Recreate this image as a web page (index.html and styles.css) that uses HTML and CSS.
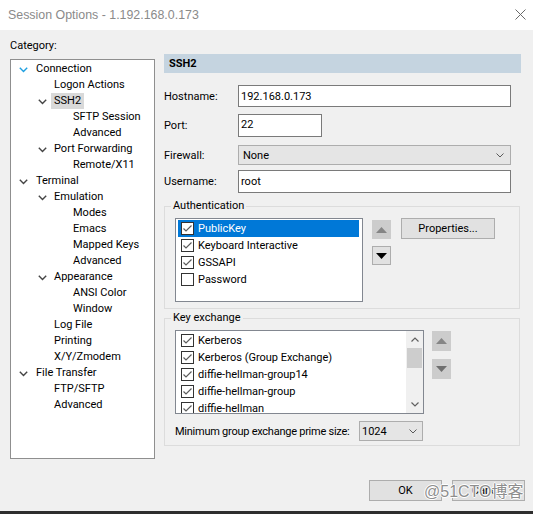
FILE: index.html
```html
<!DOCTYPE html>
<html>
<head>
<meta charset="utf-8">
<title>Session Options</title>
<link rel="stylesheet" href="styles.css">
</head>
<body>
<div class="window">
  <div class="titlebar">
    <span class="title">Session Options - 1.192.168.0.173</span>
    <svg class="close" width="11" height="11" viewBox="0 0 11 11"><path d="M0.5 0.5L10.5 10.5M10.5 0.5L0.5 10.5" stroke="#6a6a6a" stroke-width="1" fill="none"/></svg>
  </div>
  <div class="main">
    <div class="left">
      <div class="cat-label">Category:</div>
      <div class="tree">
        <div class="node l0"><span class="tw"><svg class="chev blue" width="9" height="6" viewBox="0 0 9 6"><path d="M0.8 0.8L4.5 4.5L8.2 0.8"/></svg></span><span class="lbl">Connection</span></div>
        <div class="node l1"><span class="tw"></span><span class="lbl">Logon Actions</span></div>
        <div class="node l1"><span class="tw"><svg class="chev" width="9" height="6" viewBox="0 0 9 6"><path d="M0.8 0.8L4.5 4.5L8.2 0.8"/></svg></span><span class="lbl sel">SSH2</span></div>
        <div class="node l2"><span class="tw"></span><span class="lbl">SFTP Session</span></div>
        <div class="node l2"><span class="tw"></span><span class="lbl">Advanced</span></div>
        <div class="node l1"><span class="tw"><svg class="chev" width="9" height="6" viewBox="0 0 9 6"><path d="M0.8 0.8L4.5 4.5L8.2 0.8"/></svg></span><span class="lbl">Port Forwarding</span></div>
        <div class="node l2"><span class="tw"></span><span class="lbl">Remote/X11</span></div>
        <div class="node l0"><span class="tw"><svg class="chev" width="9" height="6" viewBox="0 0 9 6"><path d="M0.8 0.8L4.5 4.5L8.2 0.8"/></svg></span><span class="lbl">Terminal</span></div>
        <div class="node l1"><span class="tw"><svg class="chev" width="9" height="6" viewBox="0 0 9 6"><path d="M0.8 0.8L4.5 4.5L8.2 0.8"/></svg></span><span class="lbl">Emulation</span></div>
        <div class="node l2"><span class="tw"></span><span class="lbl">Modes</span></div>
        <div class="node l2"><span class="tw"></span><span class="lbl">Emacs</span></div>
        <div class="node l2"><span class="tw"></span><span class="lbl">Mapped Keys</span></div>
        <div class="node l2"><span class="tw"></span><span class="lbl">Advanced</span></div>
        <div class="node l1"><span class="tw"><svg class="chev" width="9" height="6" viewBox="0 0 9 6"><path d="M0.8 0.8L4.5 4.5L8.2 0.8"/></svg></span><span class="lbl">Appearance</span></div>
        <div class="node l2"><span class="tw"></span><span class="lbl">ANSI Color</span></div>
        <div class="node l2"><span class="tw"></span><span class="lbl">Window</span></div>
        <div class="node l1"><span class="tw"></span><span class="lbl">Log File</span></div>
        <div class="node l1"><span class="tw"></span><span class="lbl">Printing</span></div>
        <div class="node l1"><span class="tw"></span><span class="lbl">X/Y/Zmodem</span></div>
        <div class="node l0"><span class="tw"><svg class="chev" width="9" height="6" viewBox="0 0 9 6"><path d="M0.8 0.8L4.5 4.5L8.2 0.8"/></svg></span><span class="lbl">File Transfer</span></div>
        <div class="node l1"><span class="tw"></span><span class="lbl">FTP/SFTP</span></div>
        <div class="node l1"><span class="tw"></span><span class="lbl">Advanced</span></div>
      </div>
    </div>

    <div class="right">
      <div class="header">SSH2</div>

      <div class="row r-host"><span class="flabel">Hostname:</span><div class="field wide">192.168.0.173</div></div>
      <div class="row r-port"><span class="flabel">Port:</span><div class="field port">22</div></div>
      <div class="row r-fw"><span class="flabel">Firewall:</span><div class="select wide"><span>None</span><svg class="dd" width="8" height="5" viewBox="0 0 8 5"><path d="M0.5 0.5L4 4L7.5 0.5"/></svg></div></div>
      <div class="row r-user"><span class="flabel">Username:</span><div class="field wide">root</div></div>

      <fieldset class="group auth">
        <legend>Authentication</legend>
        <div class="group-body">
          <div class="list auth-list">
            <div class="item selected"><span class="cb"><svg width="11" height="11" viewBox="0 0 11 11"><path d="M1.5 5.5L4 8L9.5 2.5"/></svg></span>PublicKey</div>
            <div class="item"><span class="cb"><svg width="11" height="11" viewBox="0 0 11 11"><path d="M1.5 5.5L4 8L9.5 2.5"/></svg></span>Keyboard Interactive</div>
            <div class="item"><span class="cb"><svg width="11" height="11" viewBox="0 0 11 11"><path d="M1.5 5.5L4 8L9.5 2.5"/></svg></span>GSSAPI</div>
            <div class="item"><span class="cb"></span>Password</div>
          </div>
          <div class="arrows">
            <div class="abtn disabled"><svg width="11" height="6" viewBox="0 0 11 6"><path d="M0 6L5.5 0L11 6Z"/></svg></div>
            <div class="abtn"><svg width="11" height="6" viewBox="0 0 11 6"><path d="M0 0L5.5 6L11 0Z"/></svg></div>
          </div>
          <div class="btn props">Properties...</div>
        </div>
      </fieldset>

      <fieldset class="group kex">
        <legend>Key exchange</legend>
        <div class="group-body">
          <div class="list kex-list">
            <div class="items">
              <div class="item"><span class="cb"><svg width="11" height="11" viewBox="0 0 11 11"><path d="M1.5 5.5L4 8L9.5 2.5"/></svg></span>Kerberos</div>
              <div class="item"><span class="cb"><svg width="11" height="11" viewBox="0 0 11 11"><path d="M1.5 5.5L4 8L9.5 2.5"/></svg></span>Kerberos (Group Exchange)</div>
              <div class="item"><span class="cb"><svg width="11" height="11" viewBox="0 0 11 11"><path d="M1.5 5.5L4 8L9.5 2.5"/></svg></span>diffie-hellman-group14</div>
              <div class="item"><span class="cb"><svg width="11" height="11" viewBox="0 0 11 11"><path d="M1.5 5.5L4 8L9.5 2.5"/></svg></span>diffie-hellman-group</div>
              <div class="item"><span class="cb"><svg width="11" height="11" viewBox="0 0 11 11"><path d="M1.5 5.5L4 8L9.5 2.5"/></svg></span>diffie-hellman</div>
            </div>
            <div class="scrollbar">
              <div class="sb-arrow"><svg width="8" height="5" viewBox="0 0 8 5"><path d="M0.5 4.5L4 1L7.5 4.5"/></svg></div>
              <div class="sb-track"><div class="sb-thumb"></div></div>
              <div class="sb-arrow"><svg width="8" height="5" viewBox="0 0 8 5"><path d="M0.5 0.5L4 4L7.5 0.5"/></svg></div>
            </div>
          </div>
          <div class="arrows kex-arrows">
            <div class="abtn disabled"><svg width="11" height="6" viewBox="0 0 11 6"><path d="M0 6L5.5 0L11 6Z"/></svg></div>
            <div class="abtn disabled dark"><svg width="11" height="6" viewBox="0 0 11 6"><path d="M0 0L5.5 6L11 0Z"/></svg></div>
          </div>
        </div>
        <div class="min-row">
          <span class="min-label">Minimum group exchange prime size:</span>
          <div class="select small"><span>1024</span><svg class="dd" width="8" height="5" viewBox="0 0 8 5"><path d="M0.5 0.5L4 4L7.5 0.5"/></svg></div>
        </div>
      </fieldset>
    </div>
  </div>

  <div class="footer">
    <div class="btn dlg">OK</div>
    <div class="btn dlg">Cancel</div>
    <div class="watermark">@51CTO博客</div>
  </div>
  <div class="bottom-line"></div>
</div>
</body>
</html>
```

FILE: styles.css
```css
* { box-sizing: border-box; }
html, body { margin: 0; padding: 0; }
body {
  font-family: Roboto, "Liberation Sans", Arial, sans-serif;
  font-size: 11px;
  color: #000;
  background: #f0f0f0;
}
.window {
  width: 533px;
  height: 514px;
  background: #f0f0f0;
  display: flex;
  flex-direction: column;
  overflow: hidden;
}
.titlebar {
  height: 30px;
  flex: none;
  background: #fff;
  display: flex;
  align-items: center;
  justify-content: space-between;
  padding: 0 7px 0 8px;
}
.title {
  font-family: "Liberation Sans", Arial, sans-serif;
  font-size: 12.4px;
  color: #8a8a8a;
}
.close { display: block; margin-top: -2px; }

.main {
  display: flex;
  height: 430px;
  flex: none;
  padding-left: 10px;
}
.left {
  width: 145px;
  padding-top: 9px;
}
.cat-label {
  height: 14px;
  line-height: 14px;
  margin-bottom: 6px;
}
.tree {
  height: 400px;
  border: 1px solid #8f8f8f;
  background: #fff;
  padding-top: 1px;
}
.node {
  height: 16px;
  display: flex;
  align-items: center;
  white-space: nowrap;
}
.l0 { padding-left: 8px; }
.l1 { padding-left: 26px; }
.l2 { padding-left: 45px; }
.tw {
  width: 17px;
  height: 16px;
  display: flex;
  align-items: center;
  flex: none;
}
.l1 .tw { padding-left: 1px; }
.chev { display: block; margin-top: 1px; }
.chev path { fill: none; stroke: #444; stroke-width: 1.4; }
.chev.blue path { stroke: #1e9fe0; }
.lbl {
  height: 16px;
  line-height: 16px;
  padding: 0 3px;
  margin-left: -3px;
}
.lbl.sel { background: #d9d9d9; }

.right {
  margin-left: 9px;
  width: 357px;
  padding-top: 24px;
}
.header {
  height: 19px;
  line-height: 19px;
  background: #c5d4e0;
  font-weight: bold;
  padding-left: 5px;
}
.row {
  display: flex;
  align-items: center;
}
.flabel { width: 74px; flex: none; }
.r-host { margin-top: 12px; height: 22px; }
.r-port { margin-top: 7px; height: 23px; }
.r-fw { margin-top: 8px; height: 20px; }
.r-user { margin-top: 5px; height: 23px; }
.field {
  height: 100%;
  background: #fff;
  border: 1px solid #7a7a7a;
  padding-left: 2px;
  display: flex;
  align-items: center;
}
.field.wide { width: 273px; }
.field.port { width: 84px; align-items: flex-start; padding-top: 3px; }
.select {
  height: 100%;
  background: #e5e5e5;
  border: 1px solid #adadad;
  padding: 0 6px 0 4px;
  display: flex;
  align-items: center;
  justify-content: space-between;
}
.select.wide { width: 273px; }
.dd path { fill: none; stroke: #5a5a5a; stroke-width: 1; }

.group {
  margin: 6px 0 0 0;
  width: 356px;
  border: 1px solid #dcdcdc;
  padding: 5px 0 6px 10px;
  min-width: 0;
}
.group legend {
  padding: 0 2px;
  margin-left: -4px;
  line-height: 14px;
  height: 14px;
}
.group-body {
  display: flex;
  align-items: flex-start;
}
.list {
  background: #fff;
  border: 1px solid #828790;
}
.auth-list {
  width: 188px;
  height: 84px;
  padding: 0 3px 0 2px;
}
.item {
  height: 17px;
  display: flex;
  align-items: center;
  white-space: nowrap;
}
.item.selected { background: #0078d7; color: #fff; }
.cb {
  width: 13px;
  height: 13px;
  flex: none;
  border: 1px solid #333;
  background: #fff;
  margin: 0 4px 0 3px;
  display: flex;
  align-items: center;
  justify-content: center;
}
.cb svg { display: block; }
.cb path { fill: none; stroke: #5c5c5c; stroke-width: 1.2; }
.auth-list .item:first-child { margin-top: 1px; }

.arrows {
  display: flex;
  flex-direction: column;
  gap: 7px;
  margin: 2px 0 0 9px;
}
.abtn {
  width: 19px;
  height: 19px;
  background: #e1e1e1;
  border: 1px solid #adadad;
  display: flex;
  align-items: center;
  justify-content: center;
}
.abtn path { fill: #000; }
.abtn.disabled { background: #cccccc; border-color: #cccccc; }
.abtn.disabled path { fill: #858585; }
.abtn.disabled.dark path { fill: #6f6f6f; }
.btn {
  background: #e1e1e1;
  border: 1px solid #adadad;
  display: flex;
  align-items: center;
  justify-content: center;
}
.props {
  width: 94px;
  height: 21px;
  margin-left: 10px;
}

.kex { margin-top: 2px; padding-bottom: 4px; }
.kex-list {
  width: 249px;
  height: 84px;
  display: flex;
  overflow: hidden;
}
.kex-list .items {
  flex: 1;
  padding: 1px 0 0 2px;
  overflow: hidden;
}
.scrollbar {
  width: 17px;
  flex: none;
  background: #f0f0f0;
  display: flex;
  flex-direction: column;
}
.sb-arrow {
  height: 17px;
  display: flex;
  align-items: center;
  justify-content: center;
}
.sb-arrow path { fill: none; stroke: #606060; stroke-width: 1.2; }
.sb-track { flex: 1; }
.sb-thumb { height: 20px; margin: 0 1px; background: #cdcdcd; }
.kex-arrows { margin: 1px 0 0 8px; gap: 8px; }
.kex-arrows .abtn { height: 20px; }

.min-row {
  display: flex;
  align-items: center;
  margin-top: 7px;
  height: 20px;
}
.min-label { width: 184px; flex: none; letter-spacing: -0.25px; }
.select.small {
  width: 64px;
  padding: 0 5px 0 2px;
}

.footer {
  flex: 1;
  position: relative;
  display: flex;
  justify-content: flex-end;
  align-items: flex-start;
  gap: 10px;
  padding: 20px 8px 0 0;
}
.dlg { width: 73px; height: 21px; }
.watermark {
  position: absolute;
  left: 424px;
  top: 22px;
  font-family: "Liberation Sans", "Noto Sans CJK SC", sans-serif;
  font-size: 16px;
  line-height: 20px;
  color: #8e8e8e;
  text-shadow: 1px 0 0 #fff, -1px 0 0 #fff, 0 1px 0 #fff, 0 -1px 0 #fff;
  white-space: nowrap;
}
.bottom-line {
  height: 3px;
  flex: none;
  background: #2e2e2e;
}
```
